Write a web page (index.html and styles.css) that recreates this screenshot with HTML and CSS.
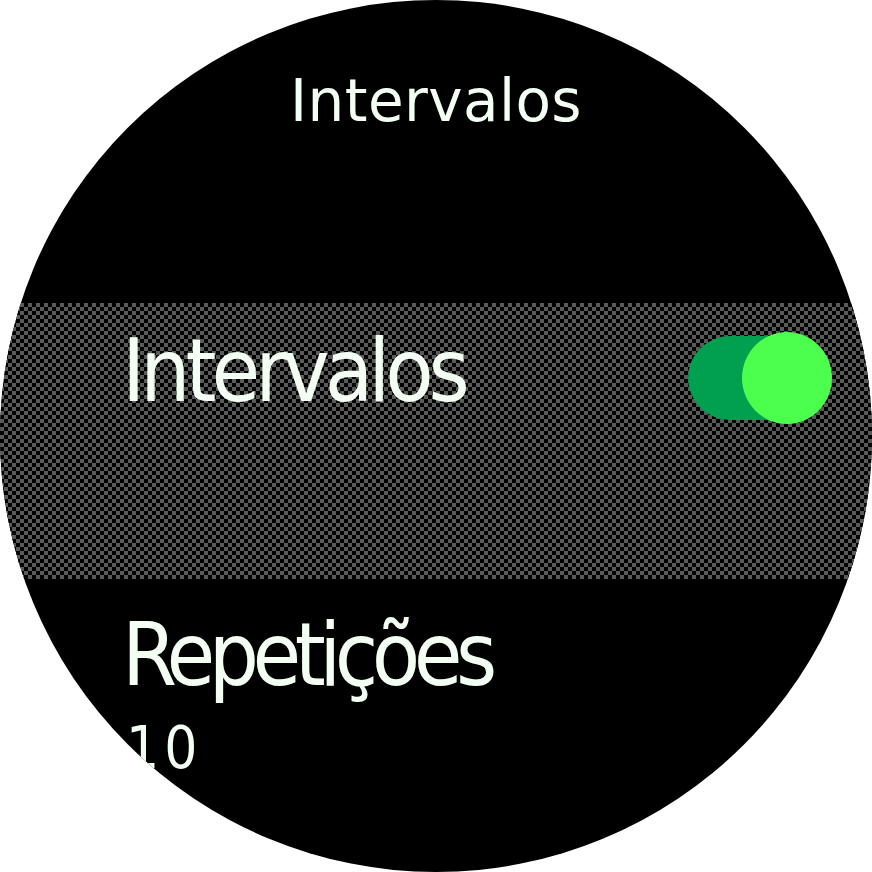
FILE: index.html
```html
<!DOCTYPE html>
<html lang="pt">
<head>
<meta charset="utf-8">
<title>Intervalos</title>
<link rel="stylesheet" href="styles.css">
</head>
<body>
<div class="screen">
  <div class="title">Intervalos</div>
  <div class="band">
    <div class="row">
      <div class="label">Intervalos</div>
      <div class="toggle"><span class="track"></span><span class="knob"></span></div>
    </div>
  </div>
  <div class="item">
    <div class="label label-tight">Repetições</div>
    <div class="value">10</div>
  </div>
</div>
</body>
</html>
```
FILE: styles.css
```css
html, body { margin: 0; padding: 0; background: #fff; }
.screen {
  width: 872px; height: 872px; border-radius: 50%;
  background: #000; overflow: hidden;
  display: flex; flex-direction: column;
  color: #f3fff3;
  font-family: "DejaVu Sans Condensed", "DejaVu Sans", sans-serif;
}
.title {
  height: 303px; box-sizing: border-box; flex: none;
  padding-top: 72px;
  text-align: center;
  font-family: "DejaVu Sans", sans-serif;
  font-size: 58px; line-height: 58px; letter-spacing: 0.4px;
}
.band {
  height: 276px; box-sizing: border-box; flex: none;
  background: repeating-conic-gradient(#5a5a5a 0 25%, #000 0 50%) 0 0 / 8px 8px;
  padding: 29px 40px 0 122px;
}
.row { display: flex; justify-content: space-between; align-items: flex-start; }
.label { font-size: 88px; line-height: 92px; letter-spacing: -5px; }
.label-tight { letter-spacing: -6.5px; }
.row .label { margin-top: -7px; }
.toggle { position: relative; width: 144px; height: 92px; }
.track {
  position: absolute; left: 0; top: 4px; width: 140px; height: 84px;
  border-radius: 42px; background: #00a04f;
}
.knob {
  position: absolute; right: 0; top: 0; width: 90px; height: 92px;
  border-radius: 50%; background: #4dff4d;
}
.item { padding: 30px 0 0 122px; }
.value { font-size: 58px; line-height: 60px; letter-spacing: 5px; padding: 17px 0 0 4px; }
```
